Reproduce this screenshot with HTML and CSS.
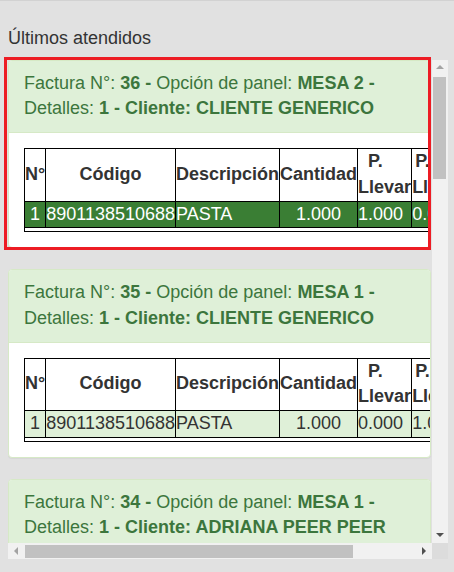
FILE: index.html
```html
<!DOCTYPE html>
<html lang="es">
<head>
<meta charset="utf-8">
<title>Últimos atendidos</title>
<link rel="stylesheet" href="styles.css">
</head>
<body>
<div class="page">
  <h4 class="title">Últimos atendidos</h4>
  <div class="scroller">
    <div class="viewport">

      <div class="panel">
        <div class="panel-heading">Factura N°: <b>36 -</b> Opción de panel: <b>MESA 2 -</b> Detalles: <b>1 - Cliente: CLIENTE GENERICO</b></div>
        <div class="panel-body">
          <table class="items">
            <thead><tr><th>N°</th><th>Código</th><th>Descripción</th><th>Cantidad</th><th class="p1">P. Llevar</th><th class="p2">P. Lleno</th><th>Total</th></tr></thead>
            <tbody><tr class="selected"><td class="c">1</td><td>8901138510688</td><td>PASTA</td><td class="c">1.000</td><td>1.000</td><td>0.000</td><td>1.000</td></tr></tbody>
            <tfoot><tr><td colspan="7"></td></tr></tfoot>
          </table>
        </div>
      </div>

      <div class="panel">
        <div class="panel-heading">Factura N°: <b>35 -</b> Opción de panel: <b>MESA 1 -</b> Detalles: <b>1 - Cliente: CLIENTE GENERICO</b></div>
        <div class="panel-body">
          <table class="items">
            <thead><tr><th>N°</th><th>Código</th><th>Descripción</th><th>Cantidad</th><th class="p1">P. Llevar</th><th class="p2">P. Lleno</th><th>Total</th></tr></thead>
            <tbody><tr><td class="c">1</td><td>8901138510688</td><td>PASTA</td><td class="c">1.000</td><td>0.000</td><td>1.000</td><td>1.000</td></tr></tbody>
            <tfoot><tr><td colspan="7"></td></tr></tfoot>
          </table>
        </div>
      </div>

      <div class="panel">
        <div class="panel-heading">Factura N°: <b>34 -</b> Opción de panel: <b>MESA 1 -</b> Detalles: <b>1 - Cliente: ADRIANA PEER PEER</b></div>
        <div class="panel-body">
          <table class="items">
            <thead><tr><th>N°</th><th>Código</th><th>Descripción</th><th>Cantidad</th><th class="p1">P. Llevar</th><th class="p2">P. Lleno</th><th>Total</th></tr></thead>
            <tbody><tr><td class="c">1</td><td>8901138510688</td><td>PASTA</td><td class="c">1.000</td><td>0.000</td><td>1.000</td><td>1.000</td></tr></tbody>
            <tfoot><tr><td colspan="7"></td></tr></tfoot>
          </table>
        </div>
      </div>

      <div class="panel">
        <div class="panel-heading">Factura N°: <b>33 -</b> Opción de panel: <b>MESA 3 -</b> Detalles: <b>1 - Cliente: CLIENTE GENERICO</b></div>
        <div class="panel-body">
          <table class="items">
            <thead><tr><th>N°</th><th>Código</th><th>Descripción</th><th>Cantidad</th><th class="p1">P. Llevar</th><th class="p2">P. Lleno</th><th>Total</th></tr></thead>
            <tbody><tr><td class="c">1</td><td>8901138510688</td><td>PASTA</td><td class="c">1.000</td><td>0.000</td><td>1.000</td><td>1.000</td></tr></tbody>
            <tfoot><tr><td colspan="7"></td></tr></tfoot>
          </table>
        </div>
      </div>

    </div>

    <div class="vbar">
      <div class="sb-btn"><span class="arrow up"></span></div>
      <div class="sb-track v"><div class="thumb v"></div></div>
      <div class="sb-btn"><span class="arrow down"></span></div>
    </div>

    <div class="hbar">
      <div class="sb-btn"><span class="arrow left"></span></div>
      <div class="sb-track h"><div class="thumb h"></div></div>
      <div class="sb-btn"><span class="arrow right"></span></div>
    </div>

    <div class="corner"></div>
  </div>
  <div class="highlight"></div>
</div>
</body>
</html>
```

FILE: styles.css
```css
html, body {
  margin: 0;
  padding: 0;
}

body {
  background: #e1e1e1;
  font-family: "Liberation Sans", Arial, Helvetica, sans-serif;
  font-size: 18px;
  line-height: 1.42857;
  color: #333;
}

.page {
  position: relative;
  border-top: 1px solid #d2d2d2;
  height: 571px;
}

.title {
  margin: 25px 0 8px 8px;
  font-size: 18px;
  font-weight: normal;
  line-height: 1.42857;
  color: #333;
}

/* scroll area with drawn classic scrollbars */
.scroller {
  margin: 0 6px 0 8px;
  height: 499px;
  display: grid;
  grid-template-columns: 1fr 16px;
  grid-template-rows: 1fr 16px;
}

.viewport {
  overflow: hidden;
  min-height: 0;
}

.vbar {
  display: flex;
  flex-direction: column;
  background: #f1f1f1;
}

.hbar {
  display: flex;
  flex-direction: row;
  background: #f1f1f1;
}

.corner {
  background: #dcdcdc;
}

.sb-btn {
  flex: 0 0 16px;
  width: 16px;
  height: 16px;
  display: flex;
  align-items: center;
  justify-content: center;
}

.sb-track {
  flex: 1 1 auto;
  display: flex;
}

.sb-track.v {
  flex-direction: column;
  padding: 1px 2px 0 1px;
}

.sb-track.h {
  flex-direction: row;
  padding: 2px 0 1px 1px;
}

.thumb {
  background: #c1c1c1;
}

.thumb.v {
  height: 102px;
}

.thumb.h {
  width: 328px;
}

.arrow {
  width: 0;
  height: 0;
  border: 0 solid transparent;
}

.arrow.up {
  border-left-width: 4px;
  border-right-width: 4px;
  border-bottom: 4px solid #a3a3a3;
  margin-bottom: 1px;
}

.arrow.down {
  border-left-width: 4px;
  border-right-width: 4px;
  border-top: 4px solid #505050;
  margin-top: 1px;
}

.arrow.left {
  border-top-width: 4px;
  border-bottom-width: 4px;
  border-right: 4px solid #a3a3a3;
}

.arrow.right {
  border-top-width: 4px;
  border-bottom-width: 4px;
  border-left: 4px solid #505050;
}

/* panels */
.panel {
  width: 423px;
  box-sizing: border-box;
  margin-bottom: 21px;
  background: #fff;
  border: 1px solid #d6e9c6;
  border-radius: 4px;
  box-shadow: 0 1px 1px rgba(0, 0, 0, 0.05);
}

.panel-heading {
  padding: 10px 15px;
  background: #dff0d8;
  color: #3c763d;
  border-bottom: 1px solid #d6e9c6;
  border-radius: 3px 3px 0 0;
}

.panel-heading b {
  font-weight: bold;
}

.panel-body {
  padding: 15px;
  overflow: hidden;
}

.items {
  border-collapse: collapse;
  border: 1px solid #000;
  font-size: 18px;
  line-height: 1.42857;
  color: #333;
}

.items th,
.items td {
  padding: 0;
  border: 1px solid #000;
}

.items th {
  font-weight: bold;
  text-align: center;
  vertical-align: middle;
}

.items th.p1 {
  text-align: left;
  text-indent: 10px;
}

.items th.p2 {
  text-align: left;
  text-indent: 3px;
}

.items td {
  text-align: left;
}

.items td.c {
  text-align: center;
}

.items tbody tr {
  background: #dff0d8;
}

.items tbody tr.selected {
  background: #3a7e34;
  color: #fff;
}

.items tfoot td {
  height: 3px;
  line-height: 0;
  font-size: 0;
  background: #fff;
}

.highlight {
  position: absolute;
  left: 4px;
  top: 56px;
  width: 427px;
  height: 193px;
  box-sizing: border-box;
  border: 3px solid #ed1c24;
  pointer-events: none;
}
```
